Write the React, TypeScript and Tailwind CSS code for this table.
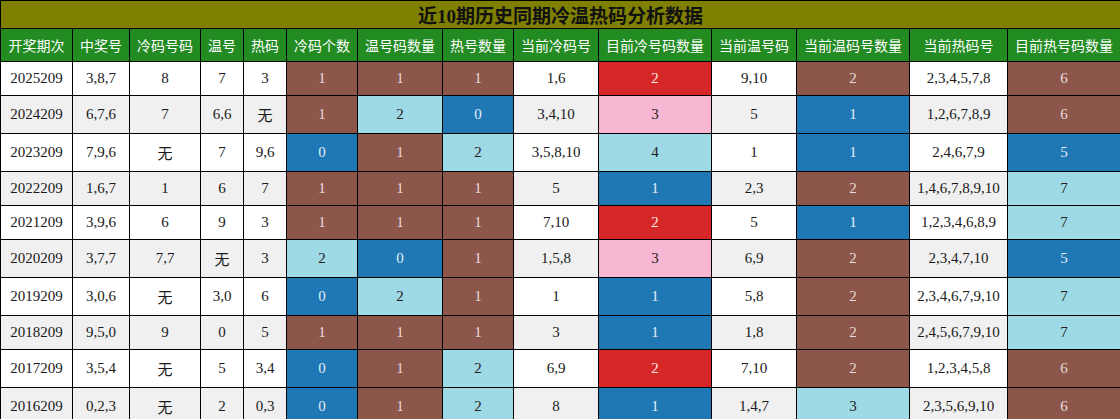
const BR = 'bg-[#8c564b] text-[#e6dcda]';
const LB = 'bg-[#9edae5] text-[#222]';
const BL = 'bg-[#1f77b4] text-[#e4eef6]';
const RD = 'bg-[#d62728] text-[#fbe4e4]';
const PK = 'bg-[#f7b6d2] text-[#222]';

const headers = [
  '开奖期次', '中奖号', '冷码号码', '温号', '热码', '冷码个数', '温号码数量',
  '热号数量', '当前冷码号', '目前冷号码数量', '当前温号码', '当前温码号数量', '当前热码号', '目前热号码数量',
];

const widths = [
  'w-[72px]', 'w-[57px]', 'w-[71px]', 'w-[43px]', 'w-[43px]', 'w-[71px]', 'w-[85px]',
  'w-[71px]', 'w-[85px]', 'w-[113px]', 'w-[85px]', 'w-[113px]', 'w-[98px]', 'w-[113px]',
];

type Cell = string | [string, string];

const rows: Cell[][] = [
  ['2025209', '3,8,7', '8', '7', '3', ['1', BR], ['1', BR], ['1', BR], '1,6', ['2', RD], '9,10', ['2', BR], '2,3,4,5,7,8', ['6', BR]],
  ['2024209', '6,7,6', '7', '6,6', '无', ['1', BR], ['2', LB], ['0', BL], '3,4,10', ['3', PK], '5', ['1', BL], '1,2,6,7,8,9', ['6', BR]],
  ['2023209', '7,9,6', '无', '7', '9,6', ['0', BL], ['1', BR], ['2', LB], '3,5,8,10', ['4', LB], '1', ['1', BL], '2,4,6,7,9', ['5', BL]],
  ['2022209', '1,6,7', '1', '6', '7', ['1', BR], ['1', BR], ['1', BR], '5', ['1', BL], '2,3', ['2', BR], '1,4,6,7,8,9,10', ['7', LB]],
  ['2021209', '3,9,6', '6', '9', '3', ['1', BR], ['1', BR], ['1', BR], '7,10', ['2', RD], '5', ['1', BL], '1,2,3,4,6,8,9', ['7', LB]],
  ['2020209', '3,7,7', '7,7', '无', '3', ['2', LB], ['0', BL], ['1', BR], '1,5,8', ['3', PK], '6,9', ['2', BR], '2,3,4,7,10', ['5', BL]],
  ['2019209', '3,0,6', '无', '3,0', '6', ['0', BL], ['2', LB], ['1', BR], '1', ['1', BL], '5,8', ['2', BR], '2,3,4,6,7,9,10', ['7', LB]],
  ['2018209', '9,5,0', '9', '0', '5', ['1', BR], ['1', BR], ['1', BR], '3', ['1', BL], '1,8', ['2', BR], '2,4,5,6,7,9,10', ['7', LB]],
  ['2017209', '3,5,4', '无', '5', '3,4', ['0', BL], ['1', BR], ['2', LB], '6,9', ['2', RD], '7,10', ['2', BR], '1,2,3,4,5,8', ['6', BR]],
  ['2016209', '0,2,3', '无', '2', '0,3', ['0', BL], ['1', BR], ['2', LB], '8', ['1', BL], '1,4,7', ['3', LB], '2,3,5,6,9,10', ['6', BR]],
];

export default function App() {
  return (
    <div className="w-[1120px] bg-white">
      <table className="w-[1120px] table-fixed border-collapse leading-[normal] font-['Liberation_Serif','Noto_Sans_CJK_SC',serif] text-center">
        <colgroup>
          {widths.map((w, i) => (
            <col key={i} className={w} />
          ))}
        </colgroup>
        <thead>
          <tr>
            <th colSpan={14} className="border border-black bg-[#808000] py-0 text-[19px] font-bold text-[#111]">
              近10期历史同期冷温热码分析数据
            </th>
          </tr>
          <tr>
            {headers.map((h) => (
              <th key={h} className="border border-black bg-[#228b22] py-1.5 px-0 text-[14px] font-normal text-white whitespace-nowrap">
                {h}
              </th>
            ))}
          </tr>
        </thead>
        <tbody>
          {rows.map((row, r) => (
            <tr key={r} className={r % 2 === 0 ? 'bg-white' : 'bg-[#f0f0f0]'}>
              {row.map((c, i) => {
                const [text, color] = typeof c === 'string' ? [c, 'text-[#1a1a1a]'] : c;
                return (
                  <td key={i} className={`border border-black py-2 px-0 text-[15px] whitespace-nowrap ${color}`}>
                    {text}
                  </td>
                );
              })}
            </tr>
          ))}
        </tbody>
      </table>
    </div>
  );
}
